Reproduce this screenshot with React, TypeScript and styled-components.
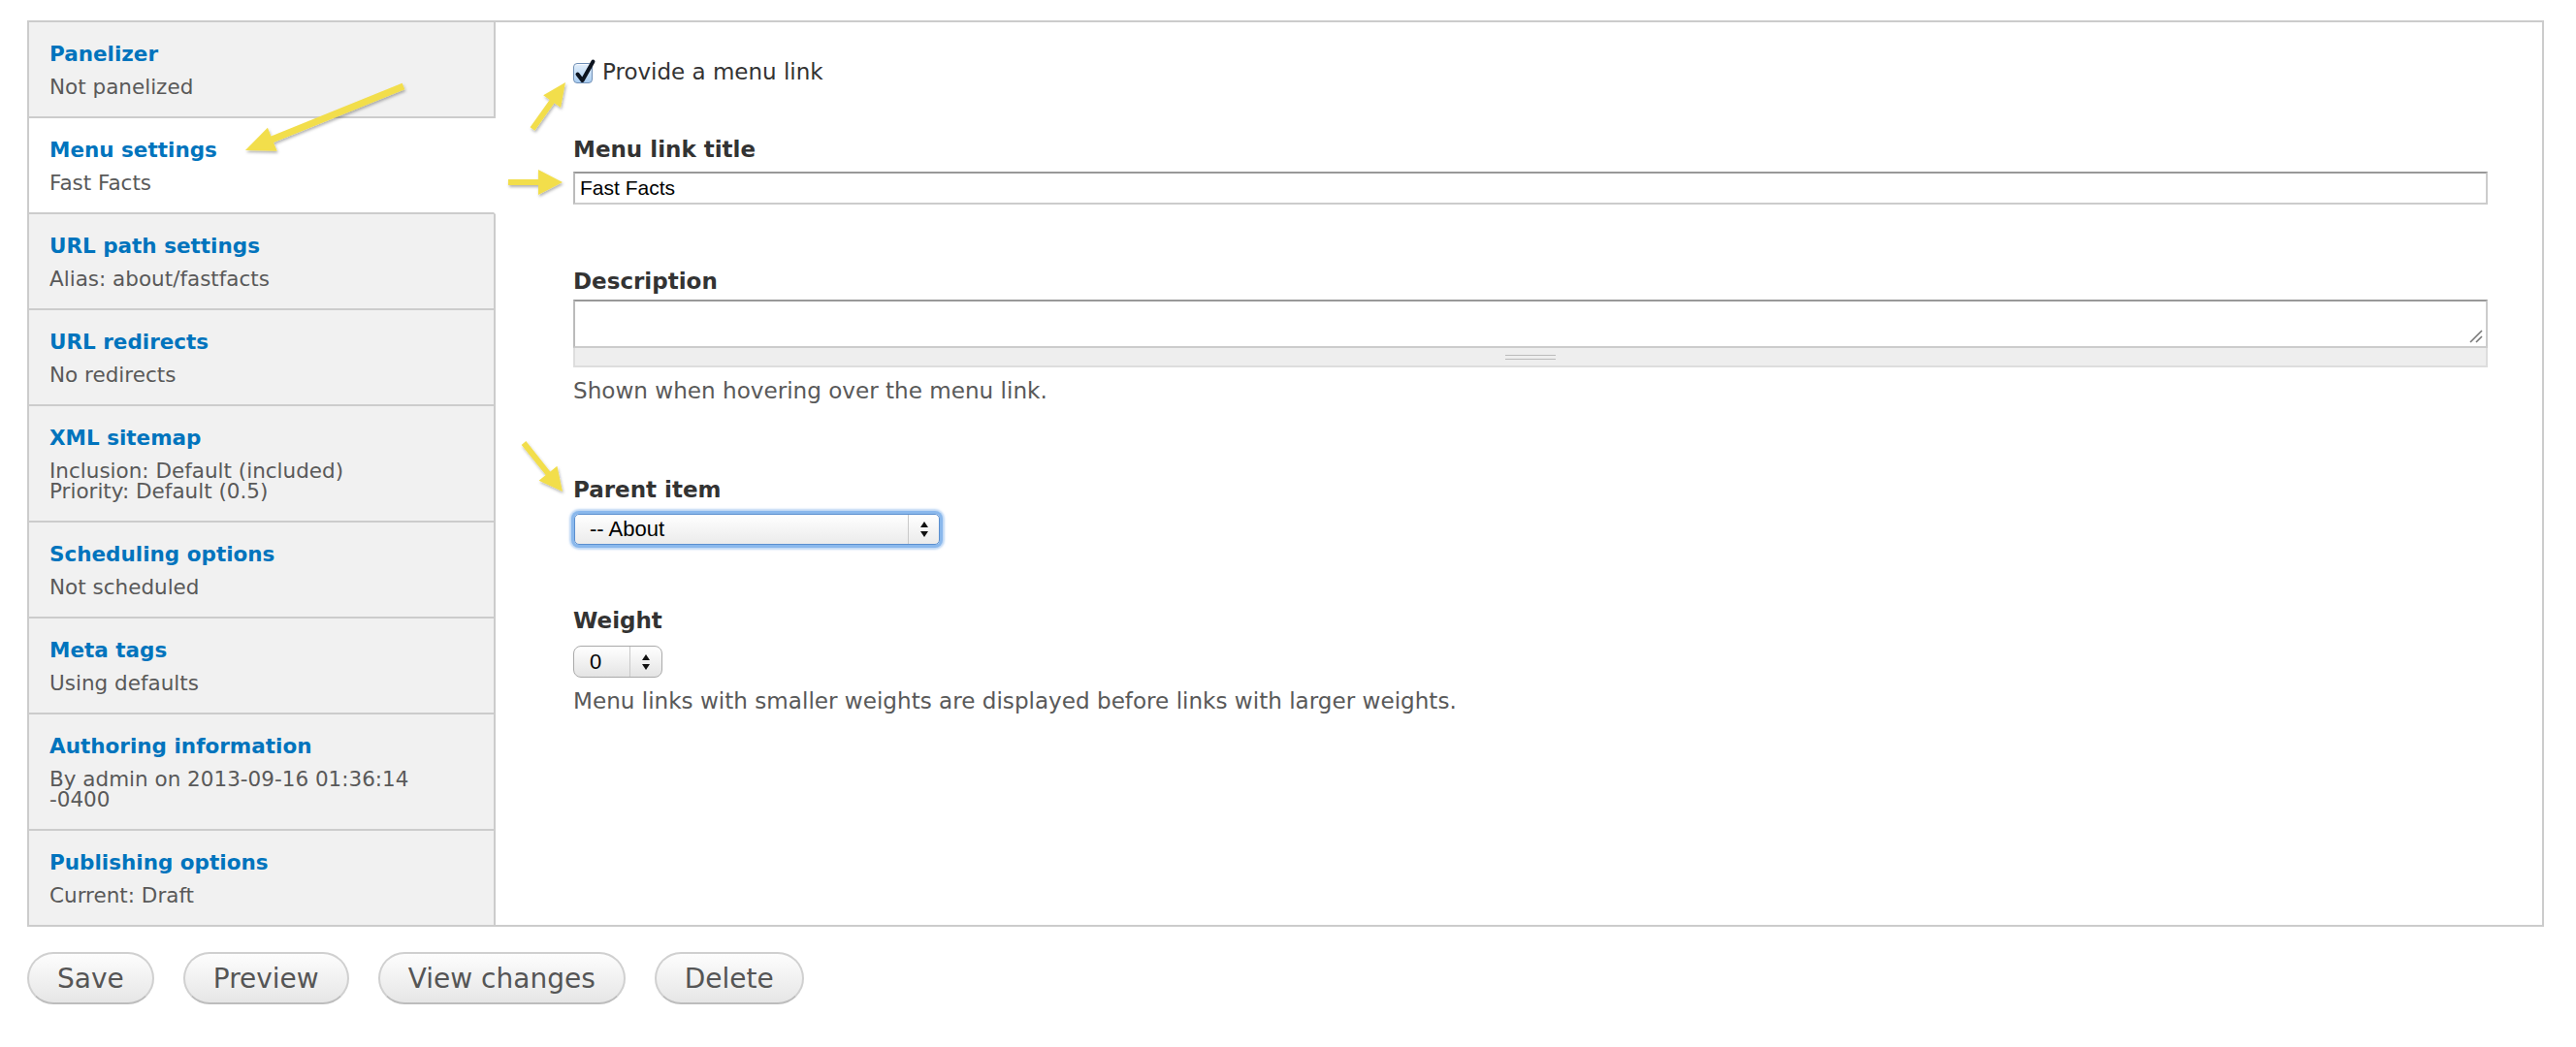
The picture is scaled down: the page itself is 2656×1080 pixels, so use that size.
import React from "react";
import styled, { createGlobalStyle } from "styled-components";

const GlobalStyle = createGlobalStyle`
  html, body { margin: 0; padding: 0; background: #fff; }
  body { font-family: "DejaVu Sans", Verdana, sans-serif; color: #333; }
  * { box-sizing: border-box; }
`;

const Page = styled.div`
  position: relative;
  width: 2656px;
  min-height: 1080px;
  padding: 21px 33px 0 28px;
`;

const Tabs = styled.div`
  display: flex;
  align-items: stretch;
  border: 2px solid #ccc;
  background: #fff;
`;

const TabList = styled.ul`
  margin: 0;
  padding: 0;
  width: 481px;
  flex-shrink: 0;
  list-style: none;
`;

const TabItem = styled.li<{ $active?: boolean }>`
  padding: 18px 21px 20px;
  background: ${(p) => (p.$active ? "#fff" : "#f1f1f1")};
  border-bottom: 2px solid #ccc;
  border-right: 2px solid ${(p) => (p.$active ? "transparent" : "#ccc")};
  &:last-child {
    border-bottom: none;
  }
`;

const TabTitle = styled.a`
  display: block;
  font-weight: bold;
  font-size: 21.5px;
  line-height: 30px;
  color: #0074bd;
  text-decoration: none;
  white-space: nowrap;
`;

const TabSummary = styled.div`
  margin-top: 8px;
  font-size: 21.5px;
  line-height: 21px;
  color: #595959;
  white-space: nowrap;
`;

const Pane = styled.div`
  flex: 1;
  min-width: 0;
  padding: 37px 56px 0 80px;
`;

const CheckRow = styled.div`
  display: flex;
  align-items: flex-start;
  gap: 10px;
  height: 28px;
`;

const CheckBox = styled.span`
  position: relative;
  display: block;
  width: 20px;
  height: 21px;
  margin-top: 5px;
  border: 1px solid #6f8fb6;
  border-radius: 4px;
  background: linear-gradient(#e2eefb, #a9cdf1);
  box-shadow: inset 0 1px 1px rgba(255, 255, 255, 0.8);
`;

const CheckMark = styled.svg`
  position: absolute;
  left: 0;
  top: -5px;
  overflow: visible;
`;

const CheckLabel = styled.label`
  font-size: 23px;
  line-height: 28px;
  color: #333;
`;

const FormItem = styled.div<{ $top: number }>`
  margin-top: ${(p) => p.$top}px;
`;

const Label = styled.div`
  font-weight: bold;
  font-size: 23px;
  line-height: 28px;
  color: #333;
`;

const TextInput = styled.input<{ $gap: number }>`
  display: block;
  width: 100%;
  height: 34px;
  margin-top: ${(p) => p.$gap}px;
  padding: 0 5px;
  border: 2px solid;
  border-color: #999 #ccc #ccc #bbb;
  background: #fff;
  font-family: "Liberation Sans", Arial, sans-serif;
  font-size: 21px;
  color: #000;
  outline: none;
`;

const TextAreaWrap = styled.div<{ $gap: number }>`
  margin-top: ${(p) => p.$gap}px;
`;

const TextArea = styled.div`
  position: relative;
  height: 50px;
  border: 2px solid;
  border-color: #999 #ccc #ccc #bbb;
  background: #fff;
`;

const Resizer = styled.svg`
  position: absolute;
  right: 2px;
  bottom: 2px;
`;

const Grippie = styled.div`
  height: 20px;
  display: flex;
  align-items: center;
  justify-content: center;
  background: #eee;
  border: 2px solid #ddd;
  border-top: none;
`;

const GripLines = styled.span`
  display: block;
  width: 52px;
  height: 5px;
  border-top: 1px solid #bbb;
  border-bottom: 1px solid #bbb;
`;

const Help = styled.div<{ $gap: number }>`
  margin-top: ${(p) => p.$gap}px;
  font-size: 23.1px;
  line-height: 28px;
  color: #595959;
  white-space: nowrap;
`;

const Select = styled.div<{ $gap: number }>`
  display: flex;
  align-items: stretch;
  width: 377px;
  height: 32px;
  margin-top: ${(p) => p.$gap}px;
  margin-left: 1px;
  border: 1px solid #5b8fcf;
  border-radius: 5px;
  background: linear-gradient(#ffffff, #ebebeb);
  box-shadow: 0 0 0 3px #8ab8ec, 0 0 2px 5px rgba(138, 184, 236, 0.55);
  font-family: "Liberation Sans", Arial, sans-serif;
  font-size: 22px;
  color: #000;
`;

const SelectText = styled.span`
  flex: 1;
  display: flex;
  align-items: center;
  padding-left: 15px;
`;

const SelectArrows = styled.span<{ $w: number }>`
  width: ${(p) => p.$w}px;
  display: flex;
  align-items: center;
  justify-content: center;
  border-left: 1px solid #c9c9c9;
`;

const NumberSelect = styled.div<{ $gap: number }>`
  display: flex;
  align-items: stretch;
  width: 92px;
  height: 33px;
  margin-top: ${(p) => p.$gap}px;
  border: 1px solid #aaa;
  border-radius: 8px;
  background: linear-gradient(#ffffff, #e4e4e4);
  font-family: "Liberation Sans", Arial, sans-serif;
  font-size: 22px;
  color: #000;
`;

const NumberText = styled.span`
  flex: 1;
  display: flex;
  align-items: center;
  padding-left: 16px;
`;

const Actions = styled.div`
  display: flex;
  gap: 30px;
  margin-top: 26px;
`;

const Button = styled.button`
  height: 54px;
  padding: 2px 29px 0;
  border: 2px solid #d0d0d0;
  border-bottom-color: #bdbdbd;
  border-radius: 27px;
  background: linear-gradient(#fdfdfd, #e6e6e6);
  font-family: "DejaVu Sans", Verdana, sans-serif;
  font-size: 28px;
  color: #555;
  line-height: 1;
`;

const Annotations = styled.svg`
  position: absolute;
  left: 0;
  top: 0;
  pointer-events: none;
  overflow: visible;
`;

function arrowPoints(
  tx: number,
  ty: number,
  px: number,
  py: number,
  w: number,
  hl: number,
  hw: number
): string {
  const dx = px - tx;
  const dy = py - ty;
  const len = Math.hypot(dx, dy);
  const ux = dx / len;
  const uy = dy / len;
  const nx = -uy;
  const ny = ux;
  const bx = px - ux * hl;
  const by = py - uy * hl;
  const pts: [number, number][] = [
    [tx + (nx * w) / 2, ty + (ny * w) / 2],
    [bx + (nx * w) / 2, by + (ny * w) / 2],
    [bx + (nx * hw) / 2, by + (ny * hw) / 2],
    [px, py],
    [bx - (nx * hw) / 2, by - (ny * hw) / 2],
    [bx - (nx * w) / 2, by - (ny * w) / 2],
    [tx - (nx * w) / 2, ty - (ny * w) / 2],
  ];
  return pts.map((p) => `${p[0].toFixed(1)},${p[1].toFixed(1)}`).join(" ");
}

const UpDown = ({ size = 8 }: { size?: number }) => (
  <svg width={size + 2} height={20} viewBox="0 0 10 20">
    <polygon points="5,2 9,8 1,8" fill="#111" />
    <polygon points="1,12 9,12 5,18" fill="#111" />
  </svg>
);

const tabs: { title: string; summary: string[]; active?: boolean }[] = [
  { title: "Panelizer", summary: ["Not panelized"] },
  { title: "Menu settings", summary: ["Fast Facts"], active: true },
  { title: "URL path settings", summary: ["Alias: about/fastfacts"] },
  { title: "URL redirects", summary: ["No redirects"] },
  { title: "XML sitemap", summary: ["Inclusion: Default (included)", "Priority: Default (0.5)"] },
  { title: "Scheduling options", summary: ["Not scheduled"] },
  { title: "Meta tags", summary: ["Using defaults"] },
  { title: "Authoring information", summary: ["By admin on 2013-09-16 01:36:14", "-0400"] },
  { title: "Publishing options", summary: ["Current: Draft"] },
];

export default function App() {
  return (
    <>
      <GlobalStyle />
      <Page>
        <Tabs>
          <TabList>
            {tabs.map((t) => (
              <TabItem key={t.title} $active={t.active}>
                <TabTitle href="#">{t.title}</TabTitle>
                <TabSummary>
                  {t.summary.map((s, i) => (
                    <React.Fragment key={i}>
                      {i > 0 && <br />}
                      {s}
                    </React.Fragment>
                  ))}
                </TabSummary>
              </TabItem>
            ))}
          </TabList>
          <Pane>
            <CheckRow>
              <CheckBox>
                <CheckMark width="22" height="26" viewBox="0 0 22 26">
                  <path
                    d="M3.5 15.5 L8.5 22 L19.5 2.5"
                    fill="none"
                    stroke="#0d1420"
                    strokeWidth="4"
                    strokeLinecap="round"
                    strokeLinejoin="round"
                  />
                </CheckMark>
              </CheckBox>
              <CheckLabel>Provide a menu link</CheckLabel>
            </CheckRow>

            <FormItem $top={52}>
              <Label>Menu link title</Label>
              <TextInput $gap={9} defaultValue="Fast Facts" />
            </FormItem>

            <FormItem $top={65}>
              <Label>Description</Label>
              <TextAreaWrap $gap={5}>
                <TextArea>
                  <Resizer width="16" height="16" viewBox="0 0 16 16">
                    <line x1="2" y1="14" x2="14" y2="2" stroke="#777" strokeWidth="1.6" />
                    <line x1="8" y1="14" x2="14" y2="8" stroke="#777" strokeWidth="1.6" />
                  </Resizer>
                </TextArea>
                <Grippie>
                  <GripLines />
                </Grippie>
              </TextAreaWrap>
              <Help $gap={10}>Shown when hovering over the menu link.</Help>
            </FormItem>

            <FormItem $top={74}>
              <Label>Parent item</Label>
              <Select $gap={11}>
                <SelectText>-- About</SelectText>
                <SelectArrows $w={32}>
                  <UpDown />
                </SelectArrows>
              </Select>
            </FormItem>

            <FormItem $top={64}>
              <Label>Weight</Label>
              <NumberSelect $gap={12}>
                <NumberText>0</NumberText>
                <SelectArrows $w={33}>
                  <UpDown />
                </SelectArrows>
              </NumberSelect>
              <Help $gap={10}>
                Menu links with smaller weights are displayed before links with larger weights.
              </Help>
            </FormItem>
          </Pane>
        </Tabs>

        <Actions>
          <Button>Save</Button>
          <Button>Preview</Button>
          <Button>View changes</Button>
          <Button>Delete</Button>
        </Actions>

        <Annotations width="2656" height="1080" viewBox="0 0 2656 1080">
          <defs>
            <filter id="shadow" x="-20%" y="-20%" width="140%" height="140%">
              <feDropShadow dx="1" dy="2" stdDeviation="1.5" floodColor="#000" floodOpacity="0.3" />
            </filter>
          </defs>
          <g fill="#f2de4c" filter="url(#shadow)">
            <polygon points={arrowPoints(416, 89, 253, 155, 7, 30, 26)} />
            <polygon points={arrowPoints(549, 133, 583, 85, 6, 24, 22)} />
            <polygon points={arrowPoints(524, 188, 580, 188, 6, 25, 26)} />
            <polygon points={arrowPoints(540, 457, 580, 507, 6, 24, 24)} />
          </g>
        </Annotations>
      </Page>
    </>
  );
}
